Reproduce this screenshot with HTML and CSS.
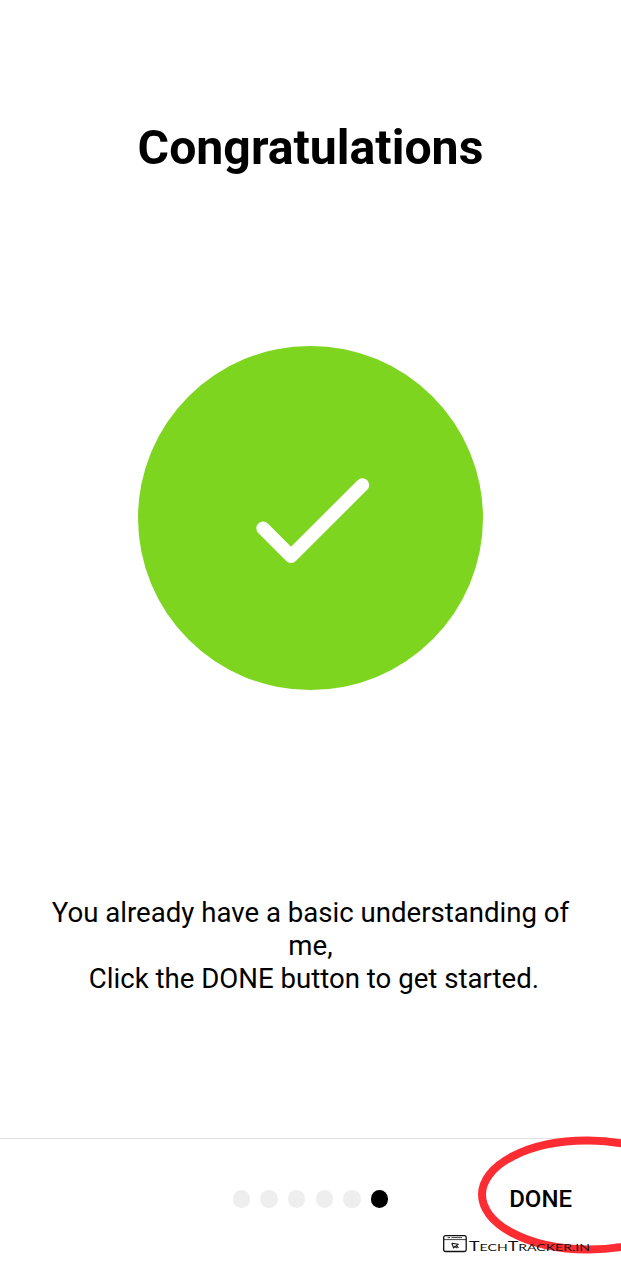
FILE: index.html
```html
<!DOCTYPE html>
<html lang="en">
<head>
<meta charset="utf-8">
<title>Congratulations</title>
<link rel="stylesheet" href="styles.css">
</head>
<body>
<div class="screen">
  <main class="content">
    <h1 class="title">Congratulations</h1>
    <div class="badge">
      <svg class="check" viewBox="0 0 345 345" aria-hidden="true">
        <path d="M125 182.500L153 210.500L224.500 139.300"/>
      </svg>
    </div>
    <p class="message">You already have a basic understanding of me,<br>&nbsp;Click the DONE button to get started.</p>
  </main>
  <footer class="footer">
    <div class="dots">
      <span class="dot"></span><span class="dot"></span><span class="dot"></span><span class="dot"></span><span class="dot"></span><span class="dot dot-active"></span>
    </div>
    <button class="done">DONE</button>
    <svg class="ring" viewBox="0 0 151 130" aria-hidden="true">
      <ellipse cx="117.500" cy="65" rx="105.500" ry="54.500" transform="rotate(0.300 117.500 65)"/>
    </svg>
    <svg class="watermark" viewBox="0 0 150 22">
      <rect class="line" x="1.700" y="2.700" width="22.500" height="15.800" rx="1.800"/>
      <path class="line thin" d="M1.700 6.600H24.200M5.500 4.600H8M9.500 4.600H20"/>
      <path class="line cursor" d="M9.800 10.200L16.300 11.200L14.300 12.600L16.500 14.800M9.800 10.200L11.700 15L13 13.200L14.700 15.200"/>
      <text class="brand" x="27" y="17.600" textLength="121" lengthAdjust="spacingAndGlyphs">T<tspan class="small">ECH</tspan>T<tspan class="small">RACKER.IN</tspan></text>
    </svg>
  </footer>
</div>
</body>
</html>
```
FILE: styles.css
```css
body {
  margin: 0;
  background: #fff;
  color: #000;
  font-family: Roboto, "Liberation Sans", sans-serif;
}

.screen {
  display: flex;
  flex-direction: column;
  height: 1280px;
  overflow: hidden;
}

.content {
  display: flex;
  flex: 1;
  flex-direction: column;
  align-items: center;
}

.title {
  margin: 119px 0 0;
  font-size: 48.2px;
  font-weight: 700;
  line-height: 57px;
}

.badge {
  width: 345px;
  height: 344.500px;
  margin-top: 169.600px;
  border-radius: 50%;
  background: #7ed520;
}

.check {
  display: block;
  width: 100%;
  height: 100%;
  fill: none;
  stroke: #fff;
  stroke-width: 13.5;
  stroke-linecap: round;
  stroke-linejoin: round;
}

.message {
  width: 530px;
  margin: 207.400px 0 0;
  font-size: 27.6px;
  line-height: 32.700px;
  text-align: center;
}

.footer {
  position: relative;
  display: grid;
  grid-template-columns: 1fr auto 1fr;
  align-items: center;
  box-sizing: border-box;
  height: 142px;
  padding-bottom: 21px;
  border-top: 1px solid #e2e2e2;
}

.dots {
  display: flex;
  grid-column: 2;
  gap: 10.100px;
}

.dot {
  width: 17.500px;
  height: 17.500px;
  border-radius: 50%;
  background: #eee;
}

.dot-active {
  background: #000;
}

.done {
  justify-self: end;
  margin-right: 49px;
  padding: 0;
  border: 0;
  background: none;
  color: #000;
  font: 500 24px Roboto, sans-serif;
}

.ring {
  position: absolute;
  top: -9px;
  right: 0;
  width: 151px;
  height: 130px;
  fill: none;
  stroke: #fb2d33;
  stroke-width: 8;
}

.watermark {
  position: absolute;
  top: 94px;
  left: 442px;
  width: 150px;
  height: 22px;
}

.line {
  fill: none;
  stroke: #111;
  stroke-width: 1.3;
  stroke-linejoin: round;
}

.thin {
  stroke-width: 0.8;
}

.cursor {
  stroke-width: 1.1;
}

.brand {
  fill: #111;
  font-family: Lato, sans-serif;
  font-size: 12.5px;
}

.small {
  font-size: 9.8px;
}
```
